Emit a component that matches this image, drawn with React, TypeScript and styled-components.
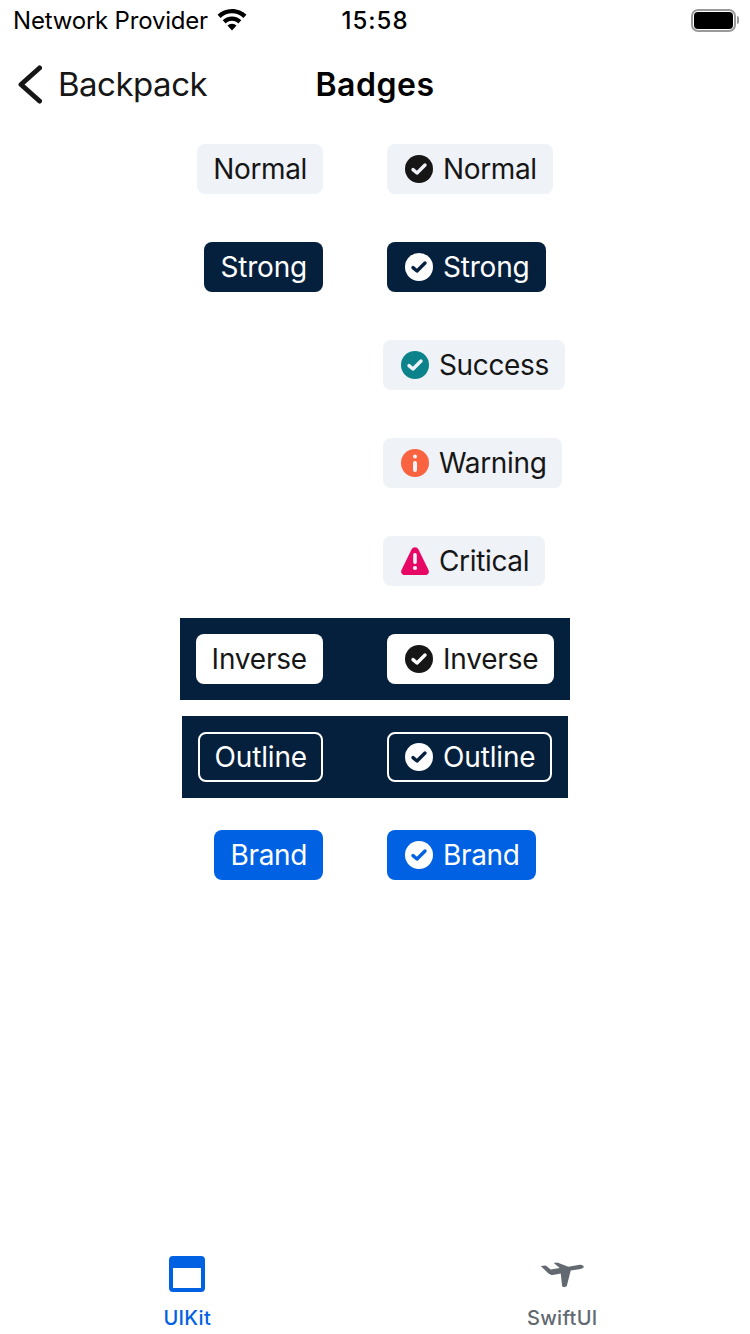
import React from "react";
import styled, { createGlobalStyle } from "styled-components";

const GlobalStyle = createGlobalStyle`
  html, body {
    margin: 0;
    padding: 0;
    background: #fff;
  }
  body {
    font-family: Inter, "Liberation Sans", sans-serif;
    color: #161616;
  }
`;

const NAVY = "#05203c";
const BLUE = "#0062e3";
const MIST = "#eff2f7";
const INK = "#161616";
const GREY = "#626971";

type Variant = "normal" | "strong" | "inverse" | "outline" | "brand";

const badgeBg: Record<Variant, string> = {
  normal: MIST,
  strong: NAVY,
  inverse: "#fff",
  outline: "transparent",
  brand: BLUE,
};

const badgeTracking: Record<Variant, string> = {
  normal: "-0.35px",
  strong: "-0.2px",
  inverse: "-0.2px",
  outline: "-0.15px",
  brand: "-0.35px",
};

const CheckIcon: React.FC<{ fill: string; cut: string }> = ({ fill, cut }) => (
  <IconBox viewBox="0 0 32 32">
    <circle cx="16" cy="16" r="14" fill={fill} />
    <path d="M10 16.6l4 3.4 8-8" fill="none" stroke={cut} strokeWidth="3.4" strokeLinecap="round" strokeLinejoin="round" />
  </IconBox>
);

const InfoIcon: React.FC = () => (
  <IconBox viewBox="0 0 32 32">
    <circle cx="16" cy="16" r="14" fill="#fa6340" />
    <circle cx="16" cy="9.6" r="2" fill={MIST} />
    <rect x="14" y="14" width="4" height="11" rx="2" fill={MIST} />
  </IconBox>
);

const AlertIcon: React.FC = () => (
  <IconBox viewBox="0 0 32 32">
    <path d="M12.500 4.500c1.500-3 5.500-3 7 0l10 20.500c1.100 2.400-.4 5-3 5H5.500c-2.600 0-4.100-2.600-3-5z" fill="#e70866" />
    <rect x="14.200" y="8" width="3.600" height="11" rx="1.800" fill={MIST} />
    <circle cx="16" cy="23" r="2.100" fill={MIST} />
  </IconBox>
);

const Badge: React.FC<{ variant?: Variant; label: string; icon?: React.ReactNode }> = ({ variant = "normal", label, icon }) => (
  <BadgeBox $variant={variant}>
    {icon}
    {label}
  </BadgeBox>
);

export default function App() {
  return (
    <>
      <GlobalStyle />
      <Screen>
        <StatusBar>
          <Carrier>
            Network Provider
            <svg width="30" height="22" viewBox="0 0 30 22">
              <path d="M15 0C9.300 0 4.200 2.200.6 5.800l3 3.200C6.400 6.100 10.500 4.300 15 4.300s8.600 1.800 11.400 4.700l3-3.200C25.800 2.200 20.700 0 15 0z" fill="#000" />
              <path d="M15 7.400c-3.700 0-7 1.500-9.300 3.900l3 3.100c1.600-1.600 3.800-2.700 6.300-2.700s4.700 1.100 6.300 2.700l3-3.100C22 8.900 18.700 7.400 15 7.400z" fill="#000" />
              <path d="M15 14.700c-1.900 0-3.500.8-4.500 1.900L15 21.500l4.500-4.900c-1-1.100-2.600-1.900-4.500-1.900z" fill="#000" />
            </svg>
          </Carrier>
          <Clock>15:58</Clock>
          <Battery>
            <BatteryFill />
          </Battery>
        </StatusBar>
        <NavBar>
          <BackLink>
            <svg width="26" height="40" viewBox="0 0 26 40">
              <path d="M23.500 4L5 20.500 23.500 37" fill="none" stroke={INK} strokeWidth="5" strokeLinecap="round" strokeLinejoin="round" />
            </svg>
            Backpack
          </BackLink>
          <Title>Badges</Title>
        </NavBar>
        <Content>
          <Row>
            <Badge label="Normal" />
            <Badge label="Normal" icon={<CheckIcon fill={INK} cut={MIST} />} />
          </Row>
          <Row>
            <Badge variant="strong" label="Strong" />
            <Badge variant="strong" label="Strong" icon={<CheckIcon fill="#fff" cut={NAVY} />} />
          </Row>
          <StatusRow>
            <Badge label="Success" icon={<CheckIcon fill="#0c838a" cut={MIST} />} />
          </StatusRow>
          <StatusRow>
            <Badge label="Warning" icon={<InfoIcon />} />
          </StatusRow>
          <StatusRow>
            <Badge label="Critical" icon={<AlertIcon />} />
          </StatusRow>
          <Bands>
            <Band>
              <Badge variant="inverse" label="Inverse" />
              <Badge variant="inverse" label="Inverse" icon={<CheckIcon fill={INK} cut="#fff" />} />
            </Band>
            <Band>
              <Badge variant="outline" label="Outline" />
              <Badge variant="outline" label="Outline" icon={<CheckIcon fill="#fff" cut={NAVY} />} />
            </Band>
          </Bands>
          <Row>
            <Badge variant="brand" label="Brand" />
            <Badge variant="brand" label="Brand" icon={<CheckIcon fill="#fff" cut={BLUE} />} />
          </Row>
        </Content>
        <TabBar>
          <Tab $active>
            <svg width="36" height="36" viewBox="0 0 36 36">
              <path fillRule="evenodd" d="M4 0h28a4 4 0 0 1 4 4v28a4 4 0 0 1-4 4H4a4 4 0 0 1-4-4V4a4 4 0 0 1 4-4zm0 12v20h28V12z" fill={BLUE} />
            </svg>
            UIKit
          </Tab>
          <Tab>
            <svg width="46" height="36" viewBox="-0.750 0 46 36">
              <path d="M1 10l5-.6 5 4 9-1.500-6-4.900 3.500-.6 11 4.400 11.500-2c2-.3 4 .8 4 2 0 1.100-1.300 1.800-3 2.100L31 14.500l-4 15.500c-.3 1-4 1.300-4.600.2L21 17.500l-6.500 1.300c-2.500.4-4.500-.3-5.800-1.400z" fill={GREY} />
            </svg>
            SwiftUI
          </Tab>
        </TabBar>
      </Screen>
    </>
  );
}

const Screen = styled.div`
  width: 750px;
  height: 1334px;
  display: flex;
  flex-direction: column;
  overflow: hidden;
`;

const StatusBar = styled.div`
  height: 40px;
  flex: none;
  display: grid;
  grid-template-columns: 1fr auto 1fr;
  align-items: center;
  padding: 0 14px 0 13px;
  font-size: 24px;
  color: #000;
`;

const Carrier = styled.div`
  display: flex;
  align-items: center;
  gap: 9px;
  letter-spacing: -0.2px;
`;

const Clock = styled.div`
  font-weight: 500;
  letter-spacing: 1px;
  margin-left: 1px;
`;

const Battery = styled.div`
  justify-self: end;
  position: relative;
  width: 45px;
  height: 23px;
  box-sizing: border-box;
  border: 2px solid #9a9a9a;
  border-radius: 7px;
  padding: 1px;
  &::after {
    content: "";
    position: absolute;
    right: -5px;
    top: 5px;
    width: 2px;
    height: 8px;
    background: #9a9a9a;
    border-radius: 0 2px 2px 0;
  }
`;

const BatteryFill = styled.div`
  height: 100%;
  background: #000;
  border-radius: 4px;
`;

const NavBar = styled.div`
  height: 88px;
  flex: none;
  position: relative;
  display: flex;
  align-items: center;
  justify-content: center;
`;

const BackLink = styled.div`
  position: absolute;
  left: 16px;
  top: 24px;
  display: flex;
  align-items: center;
  gap: 16px;
  font-size: 33px;
  letter-spacing: -0.5px;
  color: ${INK};
`;

const Title = styled.div`
  font-size: 32px;
  font-weight: 600;
  letter-spacing: 0.5px;
  color: #000;
`;

const Content = styled.div`
  flex: 1;
  display: flex;
  flex-direction: column;
  gap: 48px;
  padding-top: 16px;
`;

const Row = styled.div`
  display: flex;
  justify-content: center;
  gap: 64px;
`;

const StatusRow = styled.div`
  display: flex;
  padding-left: 383px;
`;

const Bands = styled.div`
  display: flex;
  flex-direction: column;
  align-items: center;
  gap: 16px;
  margin: -16px 0;
`;

const Band = styled.div`
  display: flex;
  gap: 64px;
  padding: 16px;
  background: ${NAVY};
`;

const BadgeBox = styled.div<{ $variant: Variant }>`
  box-sizing: border-box;
  height: 50px;
  display: flex;
  align-items: center;
  padding: 0 ${(p) => (p.$variant === "outline" ? "14px" : "16px")};
  border-radius: 8px;
  font-size: 28px;
  letter-spacing: ${(p) => badgeTracking[p.$variant]};
  white-space: nowrap;
  background: ${(p) => badgeBg[p.$variant]};
  color: ${(p) => (p.$variant === "normal" || p.$variant === "inverse" ? INK : "#fff")};
  border: ${(p) => (p.$variant === "outline" ? "2px solid #fff" : "none")};
`;

const IconBox = styled.svg`
  width: 32px;
  height: 32px;
  flex: none;
  margin-right: 8px;
`;

const TabBar = styled.div`
  flex: none;
  height: 98px;
  display: grid;
  grid-template-columns: 374.5px 1fr;
`;

const Tab = styled.div<{ $active?: boolean }>`
  display: flex;
  flex-direction: column;
  align-items: center;
  gap: 14px;
  padding-top: 20px;
  font-size: 20px;
  font-weight: 500;
  letter-spacing: 0.3px;
  color: ${(p) => (p.$active ? BLUE : GREY)};
`;
